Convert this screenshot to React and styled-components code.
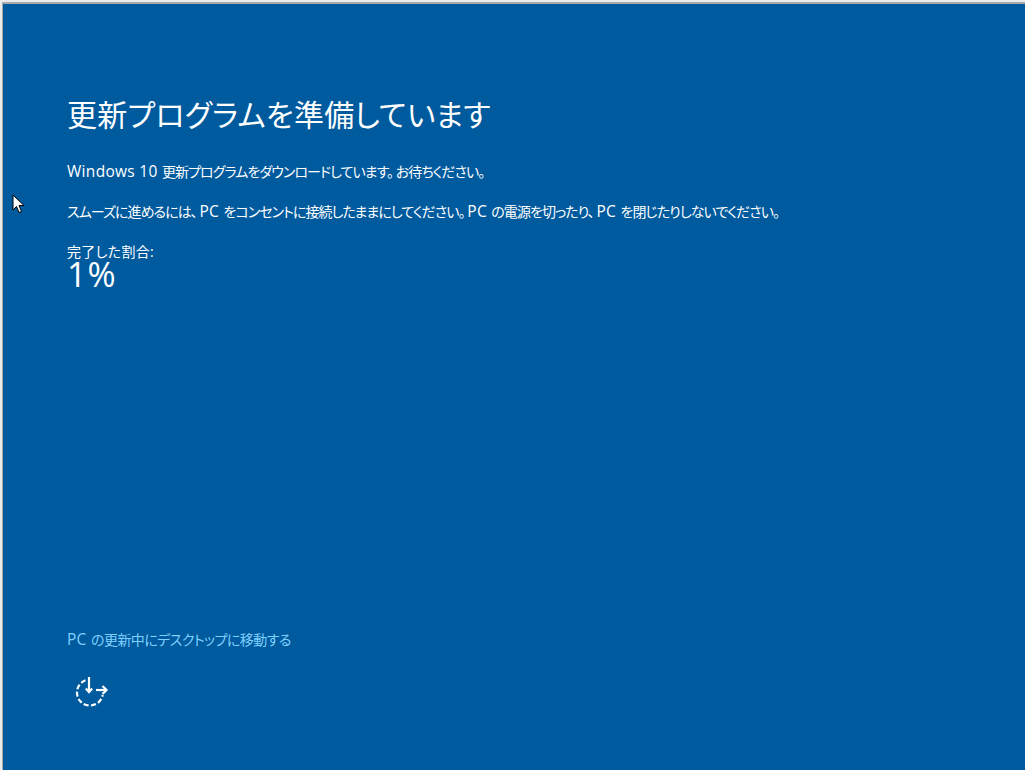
import React from "react";
import styled, { createGlobalStyle } from "styled-components";

const GlobalStyle = createGlobalStyle`
	html, body {
		margin: 0;
		padding: 0;
		background: #f0f0f0;
	}
`;

const Frame = styled.div`
	width: 1025px;
	height: 770px;
	box-sizing: border-box;
	overflow: hidden;
	position: relative;
	background: #005a9e;
	border-top: 2px solid #ececec;
	border-left: 2px solid #ececec;
	font-family: "Open Sans", "Noto Sans CJK JP", sans-serif;
	font-feature-settings: "palt";
	color: #fff;
`;

const Screen = styled.main`
	height: 100%;
	box-sizing: border-box;
	border-top: 2px solid #a9a9a9;
	border-left: 1px solid #a9a9a9;
	padding: 89px 0 0 64px;
	display: flex;
	flex-direction: column;
`;

const Title = styled.h1`
	margin: 0;
	font-size: 30px;
	line-height: 44px;
	font-weight: 400;
	letter-spacing: 0.25px;
`;

const Message = styled.p`
	margin: ${(props) => props.$top}px 0 0;
	font-size: 14px;
	line-height: 20px;
	letter-spacing: -0.95px;
	white-space: nowrap;
`;

// the latin runs are wider than the kana around them
const Latin = styled.span`
	font-size: 15.5px;
	letter-spacing: 0.3px;
`;

const ProgressLabel = styled.div`
	margin-top: 21px;
	font-size: 14px;
	line-height: 18px;
	letter-spacing: 0.3px;
`;

const ProgressValue = styled.div`
	font-size: 34px;
	line-height: 26px;
	letter-spacing: 1px;
`;

const Footer = styled.footer`
	margin-top: auto;
	padding-bottom: 63px;
	display: flex;
	flex-direction: column;
	align-items: flex-start;
	gap: 25px;
`;

const DesktopLink = styled.a`
	font-size: 14px;
	line-height: 20px;
	letter-spacing: -0.55px;
	color: #7fd0ff;
`;

const IconBox = styled.svg`
	display: block;
	margin-left: 6px;
`;

const Cursor = styled.svg`
	position: absolute;
	left: 10px;
	top: 192px;
`;

function UpdateIcon() {
	return (
		<IconBox width="36" height="32" viewBox="0 0 36 32" fill="none" stroke="#fff" strokeWidth="2.2">
			<path d="M12.500 5.300A13 13 0 1 0 29.700 20" strokeDasharray="5 2.400" />
			<path d="M16 2v15" />
			<path d="M12.800 13.500l3.200 3.500 3.200-3.500" />
			<path d="M23 15H33.500" />
			<path d="M29.500 11l4 4-4 4" />
		</IconBox>
	);
}

export default function App() {
	return (
		<>
			<GlobalStyle />
			<Frame>
				<Screen>
					<Title>更新プログラムを準備しています</Title>
					<Message $top={24}>
						<Latin>Windows 10 </Latin>更新プログラムをダウンロードしています。 お待ちください。
					</Message>
					<Message $top={19}>
						スムーズに進めるには、 <Latin>PC </Latin>をコンセントに接続したままにしてください。 <Latin>PC </Latin>
						の電源を切ったり、 <Latin>PC </Latin>を閉じたりしないでください。
					</Message>
					<ProgressLabel>完了した割合:</ProgressLabel>
					<ProgressValue>1%</ProgressValue>
					<Footer>
						<DesktopLink>
							<Latin>PC </Latin>の更新中にデスクトップに移動する
						</DesktopLink>
						<UpdateIcon />
					</Footer>
				</Screen>
				<Cursor width="14" height="20" viewBox="0 0 14 20">
					<path d="M1 1v15l3.500-3.500 2.500 6 2.500-1-2.500-6H12z" fill="#fff" stroke="#000" strokeWidth="1" />
				</Cursor>
			</Frame>
		</>
	);
}
